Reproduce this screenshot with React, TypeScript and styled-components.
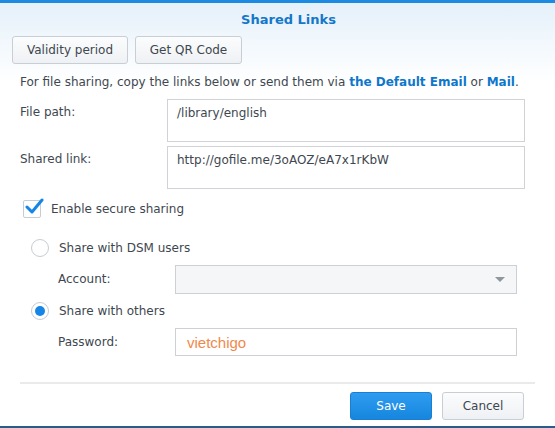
import React from "react";
import styled, { createGlobalStyle } from "styled-components";

const Global = createGlobalStyle`
  html, body { margin: 0; padding: 0; background: #fff; }
  body { font-family: "DejaVu Sans", Verdana, sans-serif; }
  * { box-sizing: border-box; }
`;

const Window = styled.div`
  width: 555px;
  height: 428px;
  display: flex;
  flex-direction: column;
  background: linear-gradient(to bottom, #e4f0fa 0px, #f4f9fd 45px, #ffffff 80px);
  border-top: 3px solid #1b8ae0;
  border-bottom: 2px solid #2a5d8c;
  color: #3e4750;
  font-size: 12px;
  overflow: hidden;
`;

const Title = styled.div`
  height: 33px;
  display: flex;
  align-items: center;
  justify-content: center;
  padding-left: 22px;
  font-weight: bold;
  font-size: 13px;
  color: #1577c9;
`;

const Toolbar = styled.div`
  display: flex;
  gap: 7px;
  padding-left: 12px;
`;

const Button = styled.button<{ $w: number; $primary?: boolean }>`
  width: ${(p) => p.$w}px;
  height: 28px;
  border-radius: 3px;
  font-family: inherit;
  font-size: 12px;
  cursor: pointer;
  padding: 0;
  border: 1px solid ${(p) => (p.$primary ? "#1a7fd0" : "#c8ced4")};
  color: ${(p) => (p.$primary ? "#ffffff" : "#3e4750")};
  background: ${(p) =>
    p.$primary
      ? "linear-gradient(to bottom, #2e9cf0, #1686de)"
      : "linear-gradient(to bottom, #fbfcfd, #eef1f4)"};
`;

const Intro = styled.p`
  margin: 10px 0 0 20px;
  font-size: 12px;
  line-height: 16px;
  white-space: nowrap;
`;

const Link = styled.span`
  color: #0f77cb;
  font-weight: bold;
`;

const FieldRow = styled.div<{ $indent?: number; $top: number; $label: number }>`
  display: grid;
  grid-template-columns: ${(p) => p.$label}px auto;
  padding-left: ${(p) => 20 + (p.$indent ?? 0)}px;
  margin-top: ${(p) => p.$top}px;
`;

const Label = styled.div<{ $pad: number }>`
  padding-top: ${(p) => p.$pad}px;
  line-height: 16px;
`;

const TextBox = styled.div`
  width: 358px;
  height: 43px;
  border: 1px solid #cfd3d7;
  background: #fff;
  padding: 5px 9px;
  font-size: 12px;
  line-height: 16px;
  color: #3e4750;
`;

const Select = styled.div`
  width: 342px;
  height: 29px;
  border: 1px solid #cdd1d5;
  background: #f4f6f8;
  display: flex;
  align-items: center;
  justify-content: flex-end;
  padding-right: 11px;
`;

const Caret = styled.span`
  width: 0;
  height: 0;
  border-left: 5px solid transparent;
  border-right: 5px solid transparent;
  border-top: 5px solid #8f969c;
`;

const Input = styled.div`
  width: 342px;
  height: 28px;
  border: 1px solid #cdd1d5;
  background: #fff;
  display: flex;
  align-items: center;
  padding-left: 11px;
  font-family: "Liberation Sans", Arial, sans-serif;
  font-size: 15px;
  color: #f0894c;
`;

const CheckRow = styled.div`
  display: flex;
  align-items: center;
  gap: 10px;
  margin: 11px 0 0 23px;
  height: 18px;
`;

const CheckBox = styled.span`
  position: relative;
  width: 18px;
  height: 18px;
  border: 1px solid #c6ccd2;
  border-radius: 2px;
  background: #fff;
`;

const Tick = styled.svg`
  position: absolute;
  left: 1px;
  top: -4px;
`;

const RadioRow = styled.div<{ $top: number }>`
  display: flex;
  align-items: center;
  gap: 10px;
  margin: ${(p) => p.$top}px 0 0 31px;
  height: 18px;
`;

const Radio = styled.span<{ $on?: boolean }>`
  width: 18px;
  height: 18px;
  border-radius: 50%;
  border: 1px solid #c6ccd2;
  background: #fff;
  display: flex;
  align-items: center;
  justify-content: center;
  &::after {
    content: "";
    width: 10px;
    height: 10px;
    border-radius: 50%;
    background: ${(p) => (p.$on ? "#1585e6" : "transparent")};
  }
`;

const Spacer = styled.div`
  flex: 1;
`;

const Divider = styled.div`
  margin: 0 20px;
  height: 2px;
  background: #e8eaec;
`;

const Footer = styled.div`
  display: flex;
  justify-content: flex-end;
  gap: 10px;
  padding: 8px 31px 6px 0;
`;

export default function App() {
  return (
    <>
      <Global />
      <Window>
        <Title>Shared Links</Title>
        <Toolbar>
          <Button $w={116}>Validity period</Button>
          <Button $w={107}>Get QR Code</Button>
        </Toolbar>
        <Intro>
          For file sharing, copy the links below or send them via{" "}
          <Link>the Default Email</Link> or <Link>Mail</Link>.
        </Intro>
        <FieldRow $top={9} $label={147}>
          <Label $pad={5}>File path:</Label>
          <TextBox>/library/english</TextBox>
        </FieldRow>
        <FieldRow $top={4} $label={147}>
          <Label $pad={5}>Shared link:</Label>
          <TextBox>http://gofile.me/3oAOZ/eA7x1rKbW</TextBox>
        </FieldRow>
        <CheckRow>
          <CheckBox>
            <Tick width="20" height="20" viewBox="0 0 20 20">
              <path d="M2 10 L7 15 L17 3" fill="none" stroke="#1585e6" strokeWidth="3" strokeLinecap="round" strokeLinejoin="round" />
            </Tick>
          </CheckBox>
          Enable secure sharing
        </CheckRow>
        <RadioRow $top={21}>
          <Radio />
          Share with DSM users
        </RadioRow>
        <FieldRow $indent={38} $top={8} $label={117}>
          <Label $pad={6}>Account:</Label>
          <Select>
            <Caret />
          </Select>
        </FieldRow>
        <RadioRow $top={8}>
          <Radio $on />
          Share with others
        </RadioRow>
        <FieldRow $indent={38} $top={8} $label={117}>
          <Label $pad={6}>Password:</Label>
          <Input>vietchigo</Input>
        </FieldRow>
        <Spacer />
        <Divider />
        <Footer>
          <Button $w={82} $primary>Save</Button>
          <Button $w={82}>Cancel</Button>
        </Footer>
      </Window>
    </>
  );
}
